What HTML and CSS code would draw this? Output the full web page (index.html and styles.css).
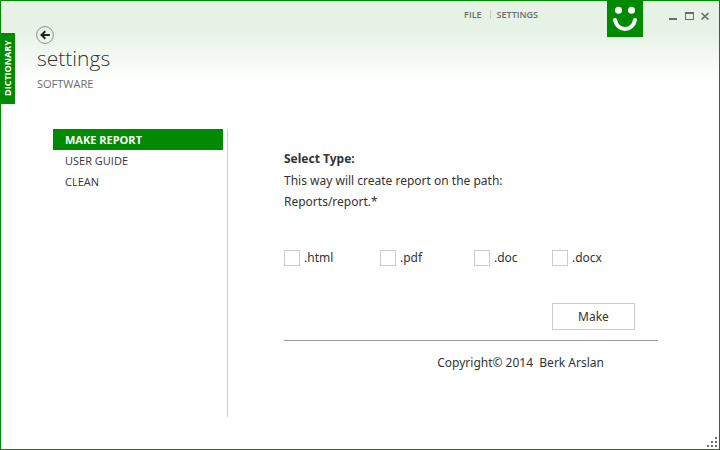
FILE: index.html
```html
<!DOCTYPE html>
<html lang="en">
<head>
<meta charset="utf-8">
<title>Dictionary</title>
<link rel="stylesheet" href="styles.css">
</head>
<body>
<div class="window">
  <header class="titlebar">
    <nav class="links">
      <a href="#file">FILE</a>
      <a href="#settings">SETTINGS</a>
    </nav>
    <svg class="logo" viewBox="0 0 36 36" aria-hidden="true">
      <circle cx="11.5" cy="9.3" r="3.5" fill="#fff"/>
      <circle cx="24.5" cy="9.3" r="3.5" fill="#fff"/>
      <path d="M8 19c1.2 5.500 5.200 9 10 9s8.800-3.500 10-9" fill="none" stroke="#fff" stroke-width="4" stroke-linecap="round"/>
    </svg>
    <div class="controls">
      <button type="button" aria-label="Minimize"><svg viewBox="0 0 16 16"><path d="M4 11h8v2H4z" fill="#6c6c6c"/></svg></button>
      <button type="button" aria-label="Maximize"><svg viewBox="0 0 16 16"><path d="M4 5h9v8H4zM5 7v5h7V7z" fill="#6c6c6c" fill-rule="evenodd"/></svg></button>
      <button type="button" aria-label="Close"><svg viewBox="0 0 16 16"><path d="M4.500 6l7 6.500M11.500 6l-7 6.500" fill="none" stroke="#6c6c6c" stroke-width="1.700"/></svg></button>
    </div>
  </header>
  <a class="tab" href="#dictionary">DICTIONARY</a>

  <div class="heading">
    <button class="back" type="button" aria-label="Back">
      <svg viewBox="0 0 18 18"><circle cx="9" cy="9" r="8.400" fill="none" stroke="#8b928b" stroke-width="1"/><path d="M13.800 9H5.500M9.300 5.200L5.500 9l3.800 3.800" fill="none" stroke="#222" stroke-width="2"/></svg>
    </button>
    <h1>settings</h1>
    <h2>SOFTWARE</h2>
  </div>

  <div class="body">
    <nav class="menu">
      <a class="active" href="#report">MAKE REPORT</a>
      <a href="#guide">USER GUIDE</a>
      <a href="#clean">CLEAN</a>
    </nav>
    <main class="content">
      <form>
        <h3>Select Type:</h3>
        <p>This way will create report on the path:<br>Reports/report.*</p>
        <div class="types">
          <label><input type="checkbox" name="html">.html</label>
          <label><input type="checkbox" name="pdf">.pdf</label>
          <label><input type="checkbox" name="doc">.doc</label>
          <label><input type="checkbox" name="docx">.docx</label>
          <button class="make" type="button">Make</button>
        </div>
      </form>
      <footer>Copyright© 2014&nbsp; Berk Arslan</footer>
    </main>
  </div>
  <svg class="grip" viewBox="0 0 10 10" aria-hidden="true"><path d="M8 0h2v2H8zM4 4h2v2H4zM8 4h2v2H8zM0 8h2v2H0zM4 8h2v2H4zM8 8h2v2H8z" fill="#6c6c6c"/></svg>
</div>
</body>
</html>
```
FILE: styles.css
```css
* { box-sizing: border-box; }

body {
  margin: 0;
  font: 12px/21px "Open Sans", "Noto Sans", sans-serif;
  color: #333;
}

h1, h2, h3, p { margin: 0; }
a { color: inherit; text-decoration: none; }
button { padding: 0; border: 0; background: none; font: inherit; color: inherit; }
svg { display: block; }

.window {
  position: relative;
  display: flex;
  flex-direction: column;
  min-height: 100vh;
  border: 1px solid #008a00;
  background: linear-gradient(#e5f2e5 0, #e5f2e5 28px, #fff 82px);
}

.titlebar {
  display: flex;
  justify-content: flex-end;
  height: 25px;
  padding-right: 6px;
}

.links {
  display: flex;
  align-items: center;
  height: 27px;
  margin-right: 69px;
  font-size: 9px;
  font-weight: 600;
  line-height: 9px;
  color: #6c6c6c;
}

.links a + a {
  margin-left: 8px;
  padding-left: 6px;
  border-left: 1px solid #c8cfc8;
}

.logo { width: 36px; height: 36px; background: #008a00; }

.controls { display: flex; height: 30px; margin-left: 22px; padding-top: 6px; }
.controls button { width: 16px; height: 16px; }

.tab {
  position: absolute;
  top: 32px;
  left: 0;
  width: 14px;
  height: 71px;
  background: #008a00;
  color: #fff;
  font-size: 9px;
  font-weight: 700;
  line-height: 14px;
  text-align: center;
  writing-mode: vertical-rl;
  transform: rotate(180deg);
}

.heading { padding-left: 36px; }
.back { display: block; width: 18px; height: 18px; margin-left: -1px; }

h1 {
  font-size: 21px;
  font-weight: 300;
  line-height: 28px;
}

h2 {
  margin-top: 1px;
  font-size: 11px;
  font-weight: 400;
  color: #6c6c6c;
}

.body {
  flex: 1;
  display: flex;
  margin-top: 35px;
  padding: 0 61px 32px 52px;
}

.menu {
  width: 175px;
  padding-right: 4px;
  border-right: 1px solid #cdcdcd;
  font-size: 11px;
}

.menu a { display: block; padding-left: 12px; }
.menu .active { background: #008a00; color: #fff; font-weight: 700; }

.content {
  flex: 1;
  padding: 19px 0 0 56px;
  font-family: "Noto Sans", "Open Sans", sans-serif;
}

h3 { margin-bottom: 1px; font-size: 12px; font-weight: 700; }

.types {
  display: grid;
  grid-template-columns: 96px 94px 78px 83px;
  row-gap: 35px;
  margin-top: 35px;
  padding-bottom: 10px;
}

.types label { display: flex; align-items: center; gap: 4px; }

.types input {
  appearance: none;
  width: 16px;
  height: 16px;
  margin: 0;
  border: 1px solid #ccc;
  background: #fff;
}

.make {
  grid-column: 4;
  height: 27px;
  border: 1px solid #ccc;
  background: #fff;
}

footer {
  padding: 11px 54px 0 0;
  border-top: 1px solid #999;
  text-align: right;
}

.grip { position: absolute; right: 2px; bottom: 2px; width: 10px; height: 10px; }
```
